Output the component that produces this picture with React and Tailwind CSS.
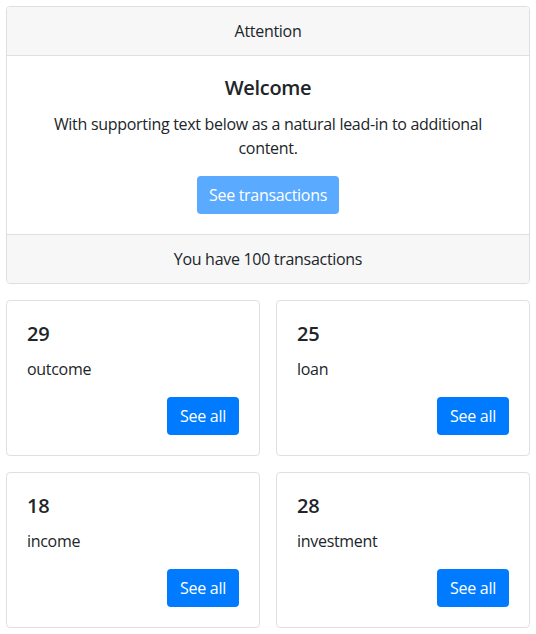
export default function App() {
  const items = [
    { n: 29, label: "outcome" },
    { n: 25, label: "loan" },
    { n: 18, label: "income" },
    { n: 28, label: "investment" },
  ];
  return (
    <div
      className="p-[6px] text-[#212529] text-[16px] leading-[24px] tracking-[-0.3px] bg-white"
      style={{ fontFamily: '"Open Sans", "Noto Sans", sans-serif' }}
    >
      <div className="border border-[#dfdfdf] rounded-[4px] text-center overflow-hidden">
        <div className="bg-[#f7f7f7] px-5 py-3 border-b border-[#dfdfdf]">Attention</div>
        <div className="p-5">
          <h5 className="text-[20px] leading-[24px] font-semibold mb-3">Welcome</h5>
          <p className="mb-4">With supporting text below as a natural lead-in to additional content.</p>
          <button className="bg-[#5aabff] text-white rounded-[4px] px-3 h-[38px] leading-[24px]">
            See transactions
          </button>
        </div>
        <div className="bg-[#f7f7f7] px-5 py-3 border-t border-[#dfdfdf]">You have 100 transactions</div>
      </div>
      <div className="grid grid-cols-2 gap-4 mt-4">
        {items.map((it) => (
          <div key={it.label} className="border border-[#dfdfdf] rounded-[4px] p-5">
            <h5 className="text-[20px] leading-[24px] font-semibold mb-3 pt-px">{it.n}</h5>
            <p className="mb-4 -mt-px">{it.label}</p>
            <div className="flex justify-end">
              <button className="bg-[#007bff] text-white rounded-[4px] w-[72px] h-[38px] leading-[24px]">
                See all
              </button>
            </div>
          </div>
        ))}
      </div>
    </div>
  );
}
